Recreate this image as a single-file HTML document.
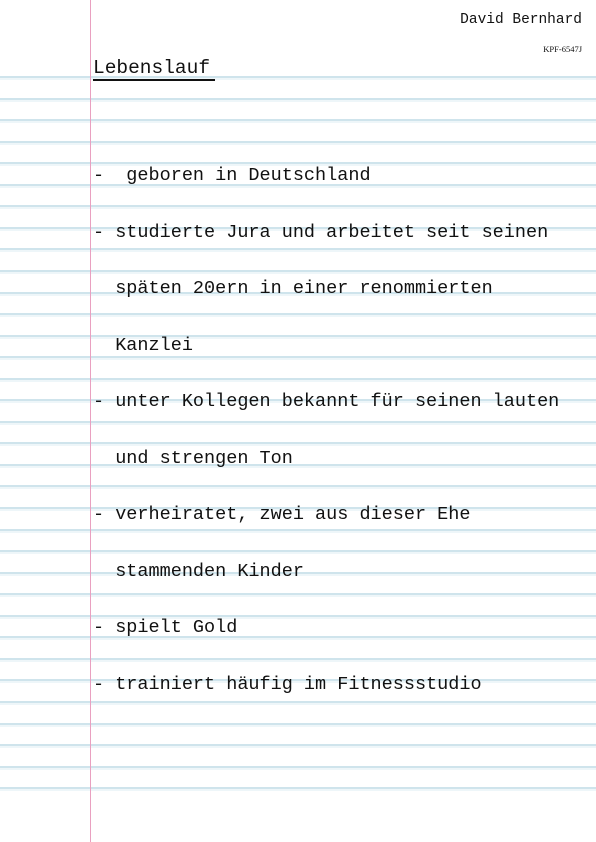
<!DOCTYPE html>
<html><head><meta charset="utf-8"><style>
html,body{margin:0;padding:0}
body{width:596px;height:842px;position:relative;overflow:hidden;background:#fff;font-family:"Liberation Mono",monospace;color:#111}
.l{position:absolute;left:0;width:596px;height:2px;background:#cfe4ec;box-shadow:0 2px 0 #eef6f9}
.m{position:absolute;left:90px;top:0;width:1px;height:842px;background:#e9a0c0}
.t{position:absolute;left:93px;font-size:18.5px;white-space:pre;line-height:20px}
</style></head><body>
<div id="lines"></div>
<div class="m"></div>
<div style="position:absolute;right:14px;top:12px;font-size:14.5px">David Bernhard</div>
<div style="position:absolute;right:14px;top:44px;font-size:8.5px;font-family:'Liberation Serif',serif">KPF-6547J</div>
<div style="position:absolute;left:93px;top:57px;font-size:19.5px">Lebenslauf</div>
<div style="position:absolute;left:93px;top:79px;width:122px;height:2px;background:#111"></div>
<div class="t" style="top:166px">-  geboren in Deutschland</div>
<div class="t" style="top:223px">- studierte Jura und arbeitet seit seinen</div>
<div class="t" style="top:279px">  späten 20ern in einer renommierten</div>
<div class="t" style="top:336px">  Kanzlei</div>
<div class="t" style="top:392px">- unter Kollegen bekannt für seinen lauten</div>
<div class="t" style="top:449px">  und strengen Ton</div>
<div class="t" style="top:505px">- verheiratet, zwei aus dieser Ehe</div>
<div class="t" style="top:562px">  stammenden Kinder</div>
<div class="t" style="top:618px">- spielt Gold</div>
<div class="t" style="top:675px">- trainiert häufig im Fitnessstudio</div>
<script>
var h='';for(var i=0;i<34;i++){h+='<div class="l" style="top:'+(76+i*21.55).toFixed(1)+'px"></div>';}
document.getElementById('lines').innerHTML=h;
</script>
</body></html>
